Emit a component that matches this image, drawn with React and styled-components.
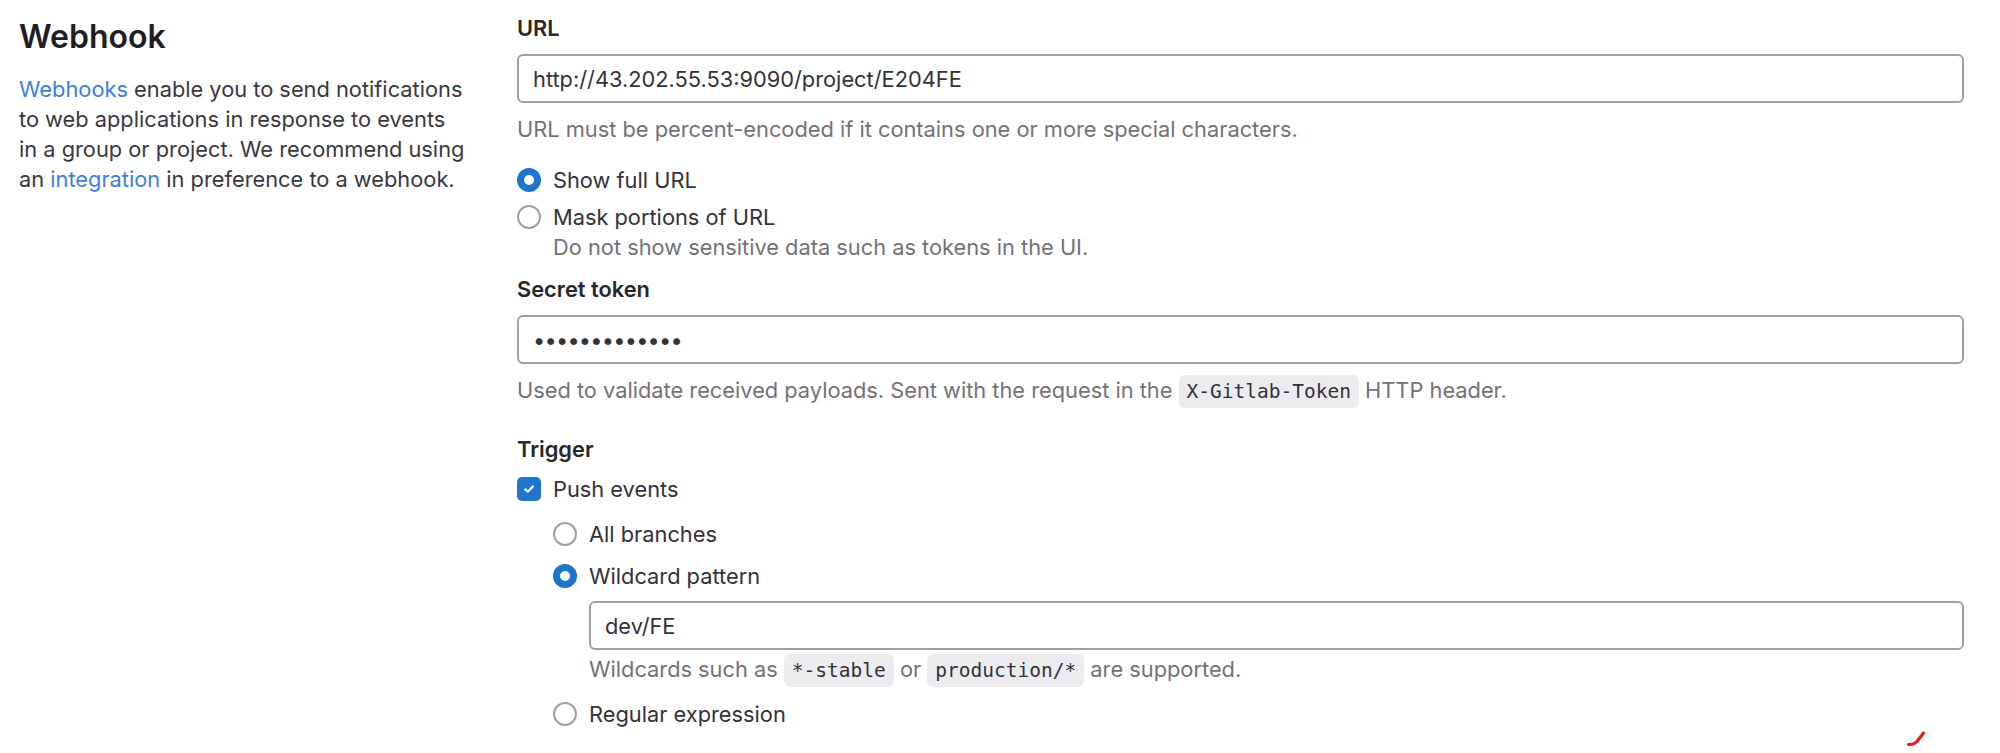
import React from "react";
import styled, { createGlobalStyle } from "styled-components";

const GlobalStyle = createGlobalStyle`
  html, body {
    margin: 0;
    padding: 0;
    background: #ffffff;
  }
  body {
    font-family: Inter, "Noto Sans", "Liberation Sans", sans-serif;
    color: #333238;
  }
`;

export default function App() {
  return (
    <>
      <GlobalStyle />
      <Page>
        <Intro>
          <Title>Webhook</Title>
          <Lead>
            <Link href="#">Webhooks</Link> enable you to send notifications to
            web applications in response to events in a group or project. We
            recommend using an <Link href="#">integration</Link> in preference
            to a webhook.
          </Lead>
        </Intro>

        <Form>
          <Field>
            <Label>URL</Label>
            <TextInput readOnly value="http://43.202.55.53:9090/project/E204FE" />
            <Help>
              URL must be percent-encoded if it contains one or more special
              characters.
            </Help>
          </Field>

          <OptionList $top={21}>
            <Radio checked label="Show full URL" />
            <Radio
              label="Mask portions of URL"
              hint="Do not show sensitive data such as tokens in the UI."
            />
          </OptionList>

          <Field $top={12}>
            <Label>Secret token</Label>
            <TextInput $secret type="password" readOnly value="abcdefghijklm" />
            <Help>
              Used to validate received payloads. Sent with the request in the{" "}
              <Code>X-Gitlab-Token</Code> HTTP header.
            </Help>
          </Field>

          <Field $top={27}>
            <Label $tight>Trigger</Label>
            <OptionList $top={10}>
              <Checkbox checked label="Push events" />
            </OptionList>
            <Nested>
              <Radio label="All branches" />
              <Radio checked label="Wildcard pattern">
                <TextInput $nested readOnly value="dev/FE" />
                <Help $tight>
                  Wildcards such as <Code>*-stable</Code> or{" "}
                  <Code>production/*</Code> are supported.
                </Help>
              </Radio>
              <Radio label="Regular expression" />
            </Nested>
          </Field>
        </Form>

        <Scribble width="26" height="22" viewBox="0 0 26 22">
          <path
            d="M3.5 17.5 Q8.5 18 12 14.5 L18.5 6"
            fill="none"
            stroke="#f01414"
            strokeWidth="3"
            strokeLinecap="round"
          />
        </Scribble>
      </Page>
    </>
  );
}

function Radio({ checked, label, hint, children }) {
  return (
    <Option>
      <RadioMark $checked={checked} />
      <OptionBody>
        <OptionText>{label}</OptionText>
        {hint && <OptionHint>{hint}</OptionHint>}
        {children}
      </OptionBody>
    </Option>
  );
}

function Checkbox({ checked, label }) {
  return (
    <Option>
      <CheckMark $checked={checked}>
        {checked && (
          <svg width="14" height="14" viewBox="0 0 14 14">
            <path
              d="M3.2 7.4 L5.8 9.8 L10.8 4.4"
              fill="none"
              stroke="#fff"
              strokeWidth="2.2"
              strokeLinecap="round"
              strokeLinejoin="round"
            />
          </svg>
        )}
      </CheckMark>
      <OptionBody>
        <OptionText>{label}</OptionText>
      </OptionBody>
    </Option>
  );
}

const Page = styled.div`
  position: relative;
  min-height: 753px;
  box-sizing: border-box;
  padding: 0 36px 0 19px;
  display: grid;
  grid-template-columns: 498px 1fr;
  align-items: start;
`;

const Intro = styled.div`
  padding-top: 18px;
`;

const Title = styled.h2`
  margin: 0;
  font-size: 32px;
  line-height: 38px;
  font-weight: 600;
  color: #1f1e24;
`;

const Lead = styled.p`
  margin: 18px 0 0;
  width: 448px;
  font-size: 21.8px;
  line-height: 30px;
  color: #3a383f;
`;

const Link = styled.a`
  color: #3e7fd9;
  text-decoration: none;
`;

const Form = styled.div`
  padding-top: 13px;
  display: flex;
  flex-direction: column;
`;

const Field = styled.div`
  margin-top: ${(p) => p.$top || 0}px;
`;

const Label = styled.label`
  display: block;
  font-size: 21.8px;
  line-height: 30px;
  font-weight: 600;
  color: #28272d;
  margin-bottom: ${(p) => (p.$tight ? 0 : 11)}px;
`;

const TextInput = styled.input`
  display: block;
  width: 100%;
  height: 49px;
  box-sizing: border-box;
  margin-top: ${(p) => (p.$nested ? 10 : 0)}px;
  padding: 0 14px;
  border: 2px solid #a09fa5;
  border-radius: 6px;
  background: #fff;
  font-family: Inter, "Noto Sans", sans-serif;
  font-size: 21.8px;
  letter-spacing: ${(p) => (p.$secret ? "-0.8px" : "normal")};
  color: #333238;
  outline: none;
`;

const Help = styled.div`
  margin: ${(p) => (p.$tight ? "4px 0 1px" : "11px 0 0")};
  font-size: 21.8px;
  line-height: 30px;
  color: #737278;
`;

const Code = styled.code`
  font-family: "DejaVu Sans Mono", "Liberation Mono", monospace;
  font-size: 19.5px;
  color: #333238;
  background: #ececef;
  border-radius: 6px;
  padding: 5px 8px;
`;

const OptionList = styled.div`
  margin-top: ${(p) => p.$top || 0}px;
  display: flex;
  flex-direction: column;
  gap: 7px;
`;

const Nested = styled.div`
  margin-top: 15px;
  padding-left: 36px;
  display: flex;
  flex-direction: column;
  gap: 12px;
`;

const Option = styled.div`
  display: grid;
  grid-template-columns: 36px 1fr;
  align-items: start;
`;

const OptionBody = styled.div`
  min-width: 0;
`;

const OptionText = styled.div`
  font-size: 21.8px;
  line-height: 30px;
  color: #333238;
`;

const OptionHint = styled.div`
  font-size: 21.8px;
  line-height: 30px;
  color: #737278;
`;

const RadioMark = styled.span`
  box-sizing: border-box;
  margin-top: 3px;
  width: 24px;
  height: 24px;
  border-radius: 50%;
  background: #fff;
  border: ${(p) => (p.$checked ? "7.5px solid #1f75cb" : "2px solid #a09fa5")};
`;

const CheckMark = styled.span`
  box-sizing: border-box;
  margin-top: 3px;
  width: 24px;
  height: 24px;
  border-radius: 5px;
  display: flex;
  align-items: center;
  justify-content: center;
  background: ${(p) => (p.$checked ? "#1f75cb" : "#fff")};
  border: ${(p) => (p.$checked ? "none" : "2px solid #a09fa5")};
`;

const Scribble = styled.svg`
  position: absolute;
  left: 1905px;
  top: 727px;
`;
